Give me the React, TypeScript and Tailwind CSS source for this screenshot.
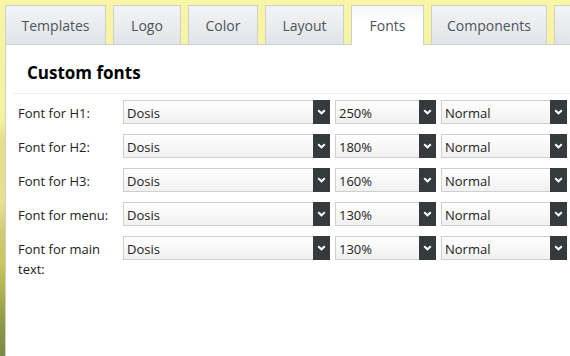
import React from "react";

const tabs = [
  { label: "Templates", w: "w-[101px]" },
  { label: "Logo", w: "w-[68px]" },
  { label: "Color", w: "w-[70px]" },
  { label: "Layout", w: "w-[79px]" },
  { label: "Fonts", w: "w-[73px]", active: true },
  { label: "Components", w: "w-[116px]" },
  { label: "", w: "w-[40px]" },
];

const rows = [
  { label: "Font for H1:", size: "250%" },
  { label: "Font for H2:", size: "180%" },
  { label: "Font for H3:", size: "160%" },
  { label: "Font for menu:", size: "130%" },
  { label: "Font for main text:", size: "130%" },
];

function Chevron() {
  return (
    <svg width="9" height="6" viewBox="0 0 9 6" className="block">
      <path d="M1.2 1.2 L4.5 4.3 L7.8 1.2" fill="none" stroke="#fff" strokeWidth="2" />
    </svg>
  );
}

function SelectBox({ value, width }: { value: string; width: string }) {
  return (
    <div className={`${width} h-[24px] flex shrink-0 border border-[#cfcfcf] bg-[linear-gradient(to_bottom,#ffffff,#f1f1f1)]`}>
      <div className="flex-1 pl-[3px] pt-[1px] leading-[22px] text-[13px] text-[#222]">{value}</div>
      <div className="w-[17px] -my-px -mr-px bg-[#353a3c] flex items-center justify-center">
        <Chevron />
      </div>
    </div>
  );
}

export default function App() {
  return (
    <div
      className="w-[570px] h-[356px] overflow-hidden flex flex-col pl-[5px] pt-[5px] bg-[linear-gradient(to_bottom,#f8f5a6_0px,#f5f1a0_120px,#e4dd8c_140px,#e7e093_200px,#d0c972_235px,#c9c65f_265px,#a8ae4f_295px,#8c9848_325px,#7b8a44_356px)]"
      style={{ fontFamily: "'Open Sans', 'Noto Sans', sans-serif" }}
    >
      {/* Tabs */}
      <div className="flex gap-[7px] h-[39px] shrink-0">
        {tabs.map((t, i) => (
          <div
            key={i}
            className={`${t.w} shrink-0 border border-b-0 border-[#cfcfcf] flex items-center justify-center text-[14px] text-[#4b5560] ${
              t.active
                ? "bg-[linear-gradient(to_bottom,#f6f6f6,#ffffff_40%)] relative z-10 h-[40px]"
                : "bg-[linear-gradient(to_bottom,#f3f4f5,#e1e4e6)] h-[39px]"
            }`}
          >
            {t.label}
          </div>
        ))}
      </div>

      {/* Panel */}
      <div className="flex-1 bg-white border-l border-t border-[#cfcfcf]">
        <div className="ml-[7px] pl-[14px] pt-[16px] pb-[8px] border-b border-[#eeeeee]">
          <h2 className="text-[17px] font-bold leading-[24px] text-black">Custom fonts</h2>
        </div>

        <div className="pl-[12px] pt-[6px] flex flex-col gap-[10px]">
          {rows.map((r) => (
            <div key={r.label} className="flex items-start">
              <div className="w-[105px] shrink-0 pt-[3px] pr-[6px] text-[13px] leading-[20px] text-[#222]">
                {r.label}
              </div>
              <div className="flex gap-[5px]">
                <SelectBox value="Dosis" width="w-[207px]" />
                <SelectBox value={r.size} width="w-[101px]" />
                <SelectBox value="Normal" width="w-[126px]" />
              </div>
            </div>
          ))}
        </div>
      </div>
    </div>
  );
}
